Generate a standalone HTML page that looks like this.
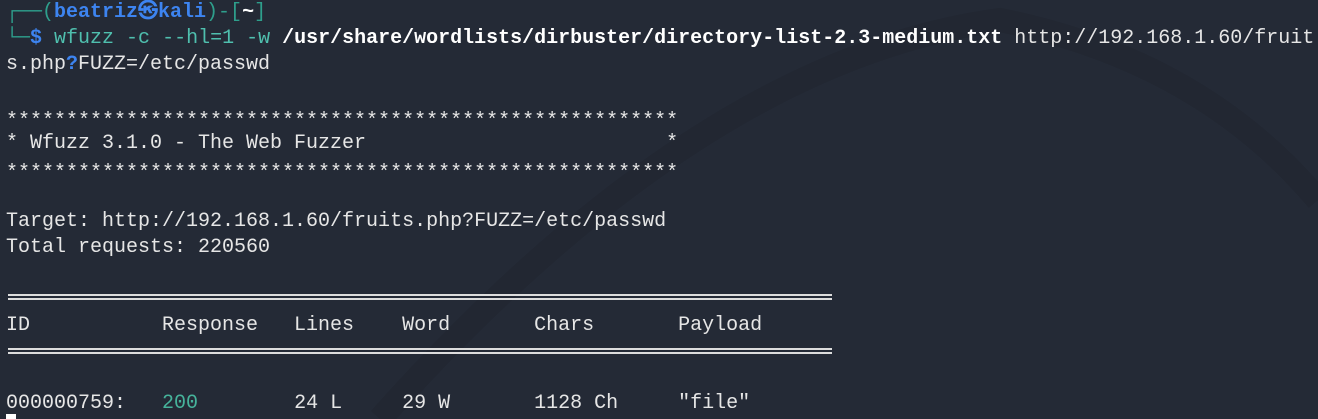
<!DOCTYPE html>
<html><head><meta charset="utf-8"><style>
html,body{margin:0;padding:0}
body{width:1318px;height:419px;background:#242a36;overflow:hidden;position:relative;font-family:"Liberation Mono","DejaVu Sans Mono",monospace;font-size:20px;color:#e6e6e6}
.l{position:absolute;left:6px;white-space:pre;line-height:26px;height:26px}
.t{color:#2e9f8c}.b{color:#3d84f0;font-weight:bold}.c{color:#4fbfae}.w{font-weight:bold;color:#fff}
.q{color:#3d84f0;font-weight:bold}
.g{color:#46b39b}
.s{position:relative;top:4px}
.dl{position:absolute;left:8px;width:824px;height:6px;border-top:2px solid #ddd;border-bottom:2px solid #ddd;box-sizing:border-box}
</style></head><body>
<svg style="position:absolute;left:0;top:0" width="1318" height="419"><path d="M380 419 Q700 60 1000 20 Q1200 60 1318 200" stroke="#222732" stroke-width="24" fill="none"/></svg>
<div class="l" style="top:0px"><span class="t">┌──(</span><span class="b">beatriz㉿kali</span><span class="t">)-[</span><span class="w">~</span><span class="t">]</span></div>
<div class="l" style="top:26px"><span class="t">└─</span><span class="b">$</span> <span class="c">wfuzz -c --hl=1 -w</span> <span class="w">/usr/share/wordlists/dirbuster/directory-list-2.3-medium.txt</span> http://192.168.1.60/fruit</div>
<div class="l" style="top:52px">s.php<span class="q">?</span>FUZZ=/etc/passwd</div>
<div class="l" style="top:105px"><span class="s">********************************************************</span></div>
<div class="l" style="top:131px">* Wfuzz 3.1.0 - The Web Fuzzer                         *</div>
<div class="l" style="top:157px"><span class="s">********************************************************</span></div>
<div class="l" style="top:209px">Target: http://192.168.1.60/fruits.php?FUZZ=/etc/passwd</div>
<div class="l" style="top:235px">Total requests: 220560</div>
<div class="dl" style="top:294px"></div>
<div class="l" style="top:313px">ID           Response   Lines    Word       Chars       Payload</div>
<div class="dl" style="top:348px"></div>
<div class="l" style="top:391px">000000759:   <span class="g">200</span>        24 L     29 W       1128 Ch     "file"</div>
<div style="position:absolute;left:6px;top:414px;width:10px;height:5px;background:#fff"></div>
</body></html>
